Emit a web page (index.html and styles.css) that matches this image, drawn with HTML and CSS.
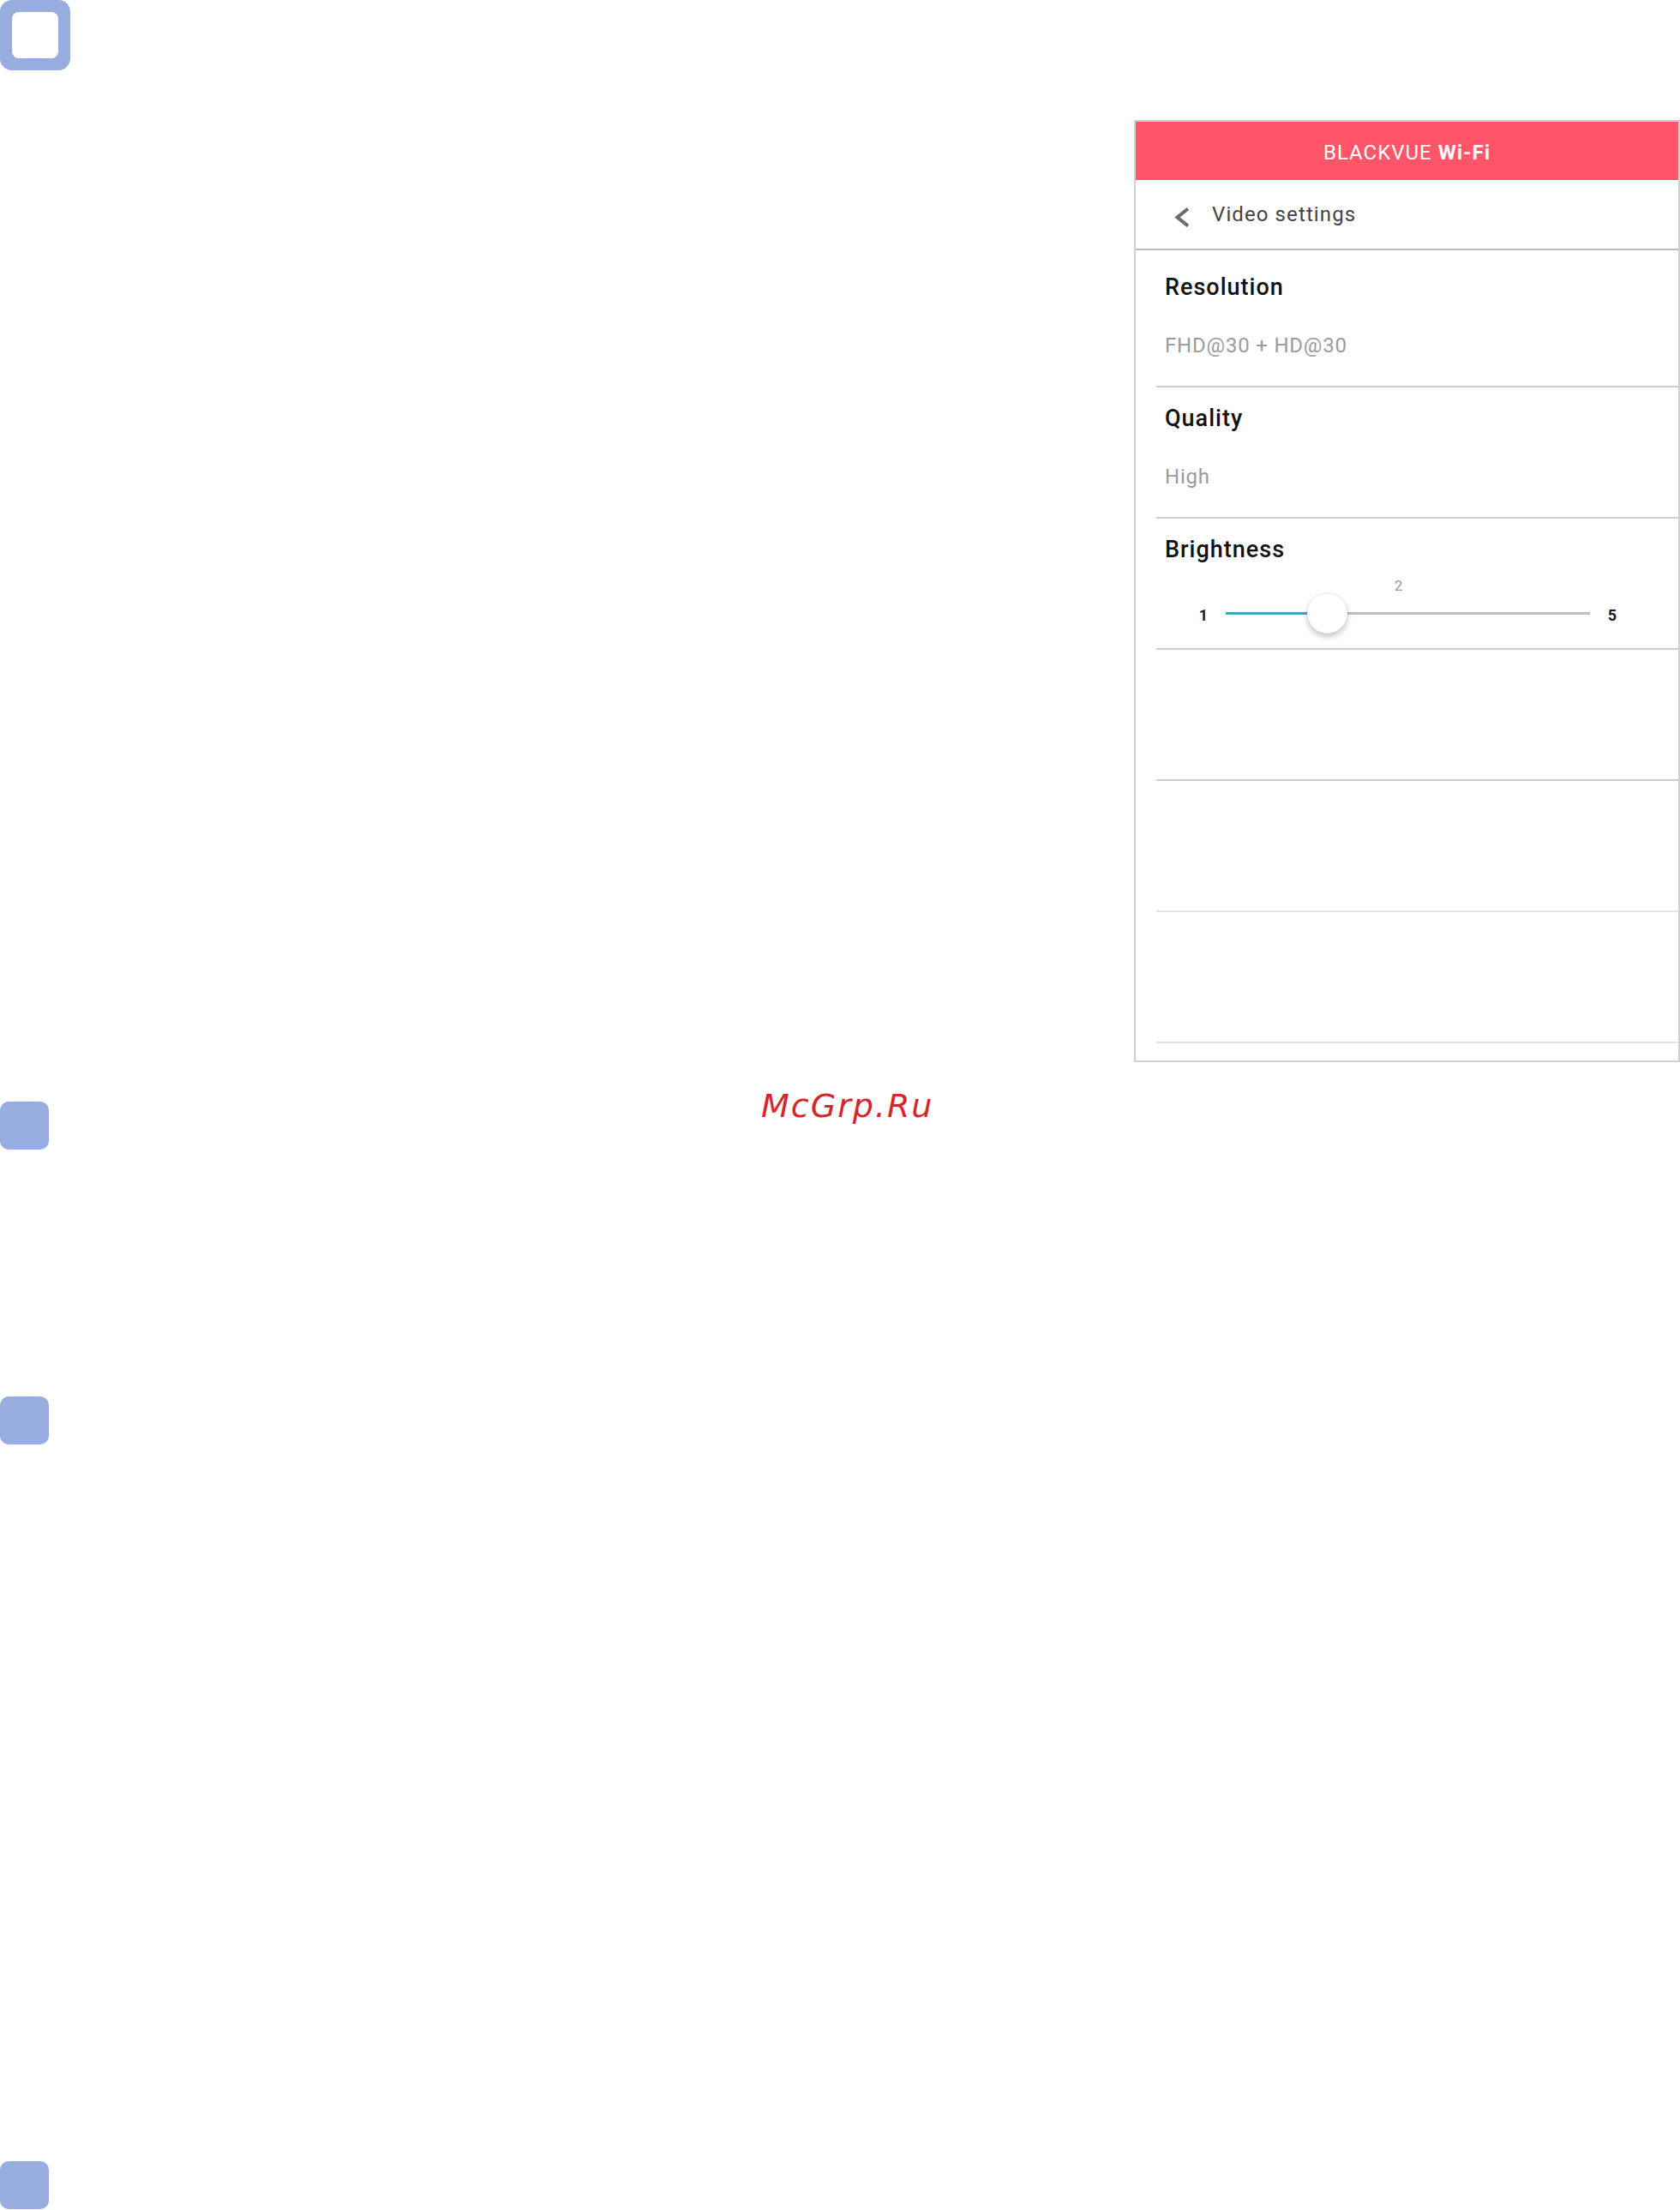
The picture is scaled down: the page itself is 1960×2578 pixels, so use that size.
FILE: index.html
```html
<!DOCTYPE html>
<html lang="en">
<head>
    <meta charset="UTF-8">
    <meta name="viewport" content="width=device-width, initial-scale=1.0">
    <title>BlackVue Wi-Fi - Video settings</title>
    <link rel="stylesheet" href="styles.css">
</head>
<body>
    <div class="page">
        <div class="marker marker-ring"><div class="marker-hole"></div></div>

        <div class="phone">
            <div class="app-bar">BLACKVUE&nbsp;<b>Wi-Fi</b></div>
            <div class="nav-bar">
                <svg class="back" width="19" height="23" viewBox="0 0 19 23">
                    <polyline points="16,1.5 3.5,11.5 16,21.5" fill="none" stroke="#6b6b6b" stroke-width="4"/>
                </svg>
                <span class="nav-title">Video settings</span>
            </div>

            <ul class="settings">
                <li class="setting first">
                    <div class="setting-name">Resolution</div>
                    <div class="setting-value">FHD@30 + HD@30</div>
                </li>
                <li class="setting">
                    <div class="setting-name">Quality</div>
                    <div class="setting-value">High</div>
                </li>
                <li class="setting setting-slider">
                    <div class="setting-name">Brightness</div>
                    <div class="slider">
                        <span></span>
                        <span class="slider-value">2</span>
                        <span></span>
                        <span class="slider-label">1</span>
                        <div class="track">
                            <div class="track-fill" style="width: calc((100% - 47px) * 0.25 + 23px)"></div>
                            <div class="thumb" style="left: calc((100% - 47px) * 0.25)"></div>
                        </div>
                        <span class="slider-label">5</span>
                    </div>
                </li>
                <li class="setting empty"></li>
                <li class="setting empty faint"></li>
                <li class="setting empty faint"></li>
            </ul>
        </div>

        <div class="stamp-row">
            <div class="marker"></div>
            <div class="watermark">McGrp.Ru</div>
        </div>
        <div class="marker marker-2"></div>
        <div class="marker marker-3"></div>
    </div>
</body>
</html>
```

FILE: styles.css
```css
body {
    margin: 0;
    background-color: #fff;
    font-family: Roboto, "Liberation Sans", sans-serif;
}
.page {
    width: 1960px;
    height: 2578px;
    overflow: hidden;
}
.marker {
    width: 57px;
    height: 56px;
    border-radius: 10px;
    background-color: #97ade0;
}
.marker-ring {
    width: 82px;
    height: 82px;
    border-radius: 14px;
    padding: 14px;
    box-sizing: border-box;
}
.marker-hole {
    width: 54px;
    height: 54px;
    border-radius: 8px;
    background-color: #fff;
}
.marker-2 {
    margin-top: 288px;
}
.marker-3 {
    margin-top: 836px;
}

/* phone screen */
.phone {
    margin: 58px 0 0 1323px;
    width: 637px;
    border: 2px solid #d0d0d0;
    box-sizing: border-box;
    background-color: #fff;
}
.app-bar {
    height: 68px;
    box-sizing: border-box;
    padding-top: 4px;
    display: flex;
    justify-content: center;
    align-items: center;
    background-color: #fe5568;
    color: #fff;
    font-size: 24px;
    letter-spacing: 1px;
}
.app-bar b {
    font-weight: 700;
}
.nav-bar {
    height: 82px;
    box-sizing: border-box;
    border-bottom: 2px solid #bdbdbd;
    padding-left: 45px;
    display: flex;
    align-items: center;
}
.back {
    margin-top: 6px;
    margin-right: 25px;
}
.nav-title {
    font-size: 24px;
    letter-spacing: 1.1px;
    color: #444;
}

.settings {
    list-style: none;
    margin: 0;
    padding: 0 0 20px;
}
.setting {
    margin-left: 24px;
    padding: 20px 0 33px 10px;
    border-bottom: 2px solid #cdcdcd;
}
.setting.first {
    padding-top: 27px;
}
.setting.empty {
    height: 153px;
    box-sizing: border-box;
    padding: 0;
}
.setting.faint {
    border-bottom-color: #e3e3e3;
}
.setting-name {
    font-size: 27px;
    line-height: 32px;
    font-weight: 500;
    letter-spacing: 1px;
    color: #111;
}
.setting-value {
    margin-top: 38px;
    font-size: 24px;
    line-height: 28px;
    letter-spacing: 0.8px;
    color: #9b9b9b;
}

/* brightness slider */
.setting-slider {
    padding-bottom: 17px;
}
.slider {
    margin-top: 18px;
    padding: 0 67px 0 35px;
    display: grid;
    grid-template-columns: 20px 1fr 20px;
    grid-template-rows: 16px 48px;
    column-gap: 16px;
    align-items: center;
}
.slider-value {
    padding-right: 22px;
    text-align: center;
    font-size: 17px;
    line-height: 16px;
    color: #9a9a9a;
}
.slider-label {
    padding-top: 4px;
    text-align: center;
    font-size: 18px;
    font-weight: 700;
    color: #1a1a1a;
}
.track {
    position: relative;
    height: 3px;
    background-color: #bebebe;
}
.track-fill {
    height: 100%;
    background-color: #3fabb8;
}
.thumb {
    position: absolute;
    top: -22px;
    width: 47px;
    height: 47px;
    border-radius: 50%;
    background-color: #fff;
    box-shadow: 0 0 1px rgba(0,0,0,0.25), 0 4px 7px rgba(0,0,0,0.22);
}

/* watermark line */
.stamp-row {
    margin-top: 32px;
    display: flex;
    align-items: flex-start;
}
.stamp-row .marker {
    margin-top: 14px;
}
.watermark {
    margin-left: 831px;
    font-family: "DejaVu Sans", sans-serif;
    font-style: oblique;
    font-size: 38px;
    line-height: 38px;
    letter-spacing: 2px;
    color: #d6262b;
}
```
